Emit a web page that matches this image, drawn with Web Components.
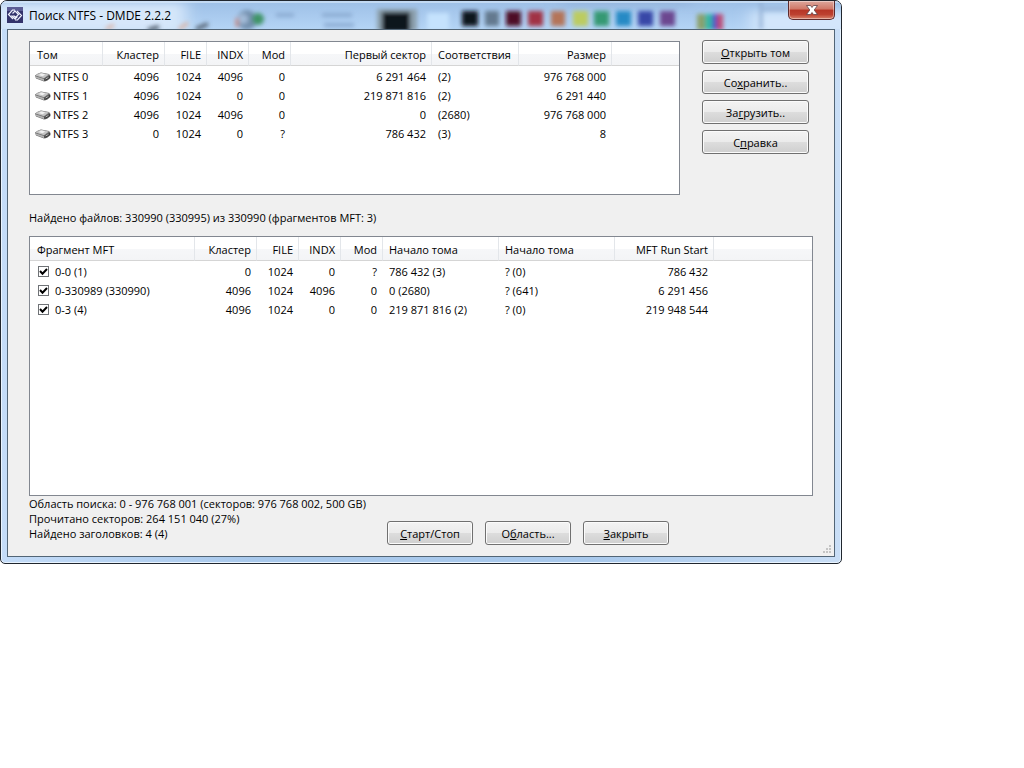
<!DOCTYPE html>
<html lang="ru">
<head>
<meta charset="utf-8">
<title>Поиск NTFS - DMDE 2.2.2</title>
<style>
    body {
        margin: 0;
        background: #fff;
        color: #000;
        font: 11px/15px "Open Sans", "Noto Sans", sans-serif;
    }

    app-window {
        max-width: 842px;
    }

    .top {
        display: flex;
        align-items: flex-start;
        gap: 22px;
        padding-right: 4px;
    }

    .top list-view {
        flex: 1;
        min-width: 0;
        min-height: 152px;
    }

    .side {
        display: flex;
        flex-direction: column;
        gap: 6px;
        width: 107px;
        margin-top: -1px;
    }

    .found {
        margin: 0;
        padding: 15px 0 11px;
    }

    .fragments {
        min-height: 258px;
    }

    .bottom {
        display: flex;
        flex-wrap: wrap;
        align-items: flex-end;
    }

    .stats {
        flex: 0 0 358px;
        padding-bottom: 4px;
    }

    .stats p {
        margin: 0;
    }

    .actions {
        display: flex;
        gap: 12px;
        padding-top: 25px;
    }

    .actions push-button {
        width: 86px;
    }
</style>
</head>
<body>

<app-window caption="Поиск NTFS - DMDE 2.2.2">
    <div class="top">
        <list-view id="volumes"></list-view>
        <div class="side">
            <push-button><u>О</u>ткрыть том</push-button>
            <push-button>Со<u>х</u>ранить..</push-button>
            <push-button>За<u>г</u>рузить..</push-button>
            <push-button>С<u>п</u>равка</push-button>
        </div>
    </div>
    <p class="found">Найдено файлов: 330990 (330995) из 330990 (фрагментов MFT: 3)</p>
    <list-view id="fragments" class="fragments"></list-view>
    <div class="bottom">
        <div class="stats">
            <p>Область поиска: 0 - 976 768 001 (секторов: 976 768 002, 500 GB)</p>
            <p>Прочитано секторов: 264 151 040 (27%)</p>
            <p>Найдено заголовков: 4 (4)</p>
        </div>
        <div class="actions">
            <push-button><u>С</u>тарт/Стоп</push-button>
            <push-button>О<u>б</u>ласть...</push-button>
            <push-button><u>З</u>акрыть</push-button>
        </div>
    </div>
</app-window>

<template id="window-template">
    <style>
        :host {
            display: block;
            box-sizing: border-box;
            position: relative;
            overflow: hidden;
            padding: 0 6px 6px;
            border: 1px solid #20262e;
            border-radius: 7px 7px 5px 5px;
            background: linear-gradient(90deg, #c4dcf8, #a9c9ec 30%, #a9c9ec 70%, #c9def6);
            box-shadow: inset 0 0 0 1px #e9f4ff;
        }

        .glass {
            position: absolute;
            left: 0;
            top: 0;
            width: 840px;
            height: 28px;
        }

        header {
            position: relative;
            display: flex;
            align-items: center;
            gap: 6px;
            height: 28px;
            box-sizing: border-box;
        }

        h1 {
            flex: 1;
            margin: 0;
            font-size: 12px;
            font-weight: normal;
        }

        .close {
            display: flex;
            align-items: center;
            justify-content: center;
            align-self: flex-start;
            width: 47px;
            height: 19px;
            padding: 0;
            border: 1px solid #5c2a2c;
            border-top: 0;
            border-radius: 0 0 5px 5px;
            background: linear-gradient(#dda79c, #cf7767 45%, #b63526 50%, #bd4130 75%, #d8836c);
            box-shadow: inset 0 0 0 1px rgba(255, 255, 255, .4);
        }

        .client {
            position: relative;
            display: flex;
            flex-direction: column;
            padding: 11px 21px;
            border: 1px solid #526576;
            background: #f0f0f0;
        }

        .grip {
            position: absolute;
            right: 2px;
            bottom: 2px;
        }
    </style>
    <svg class="glass" viewBox="0 0 840 28" aria-hidden="true">
        <defs>
            <filter id="soft" x="-50%" y="-50%" width="200%" height="200%"><feGaussianBlur stdDeviation="2"/></filter>
            <filter id="haze" x="-50%" y="-50%" width="200%" height="200%"><feGaussianBlur stdDeviation="8 4"/></filter>
            <linearGradient id="shine" x2="0" y2="1">
                <stop offset="0" stop-color="#9dbfe6"/>
                <stop offset="1" stop-color="#b4d4f5"/>
            </linearGradient>
        </defs>
        <rect width="840" height="28" fill="url(#shine)"/>
        <g filter="url(#haze)">
            <rect x="-20" y="2" width="205" height="30" fill="#d6e7fa"/>
            <rect x="750" y="10" width="110" height="24" fill="#d3e6fb"/>
            <rect x="560" y="0" width="130" height="3" fill="#86a5ce"/>
        </g>
        <g filter="url(#soft)">
            <path d="M105 28l8-4M178 28l9-6" stroke="#dcae9c" stroke-width="3"/>
            <path d="M147 29l11-3M195 28l12-5" stroke="#53616f" stroke-width="4"/>
            <circle cx="246" cy="19" r="10" fill="#7390ae"/>
            <circle cx="257" cy="18" r="6" fill="#3f9468"/>
            <circle cx="242" cy="18" r="5" fill="#a3bbd8"/>
            <path d="M236 17v9" stroke="#c9877d" stroke-width="3"/>
            <path d="M275 14h18M321 14h30M323 24h30" stroke="#8babd2" stroke-width="4"/>
            <rect x="376" y="8" width="40" height="22" fill="#8b9fab"/>
            <rect x="381" y="11" width="28" height="20" fill="#11151b"/>
            <rect x="426" y="12" width="22" height="18" fill="#c5e2fd"/>
            <rect x="461" y="10" width="16" height="15" fill="#10171f"/>
            <rect x="484" y="10" width="14" height="15" fill="#64798f"/>
            <rect x="505" y="10" width="15" height="15" fill="#4e0d27"/>
            <rect x="527" y="10" width="15" height="15" fill="#a13144"/>
            <rect x="550" y="10" width="14" height="15" fill="#b47458"/>
            <rect x="572" y="10" width="15" height="15" fill="#bccc61"/>
            <rect x="593" y="10" width="15" height="15" fill="#349973"/>
            <rect x="615" y="10" width="15" height="15" fill="#268ac5"/>
            <rect x="637" y="10" width="15" height="15" fill="#3747a7"/>
            <rect x="659" y="10" width="15" height="15" fill="#6c4690"/>
            <rect x="696" y="13" width="9" height="16" fill="#8aa06c"/>
            <rect x="704" y="13" width="7" height="16" fill="#35b7a4"/>
            <rect x="711" y="13" width="5" height="16" fill="#4b55c7"/>
            <rect x="716" y="13" width="6" height="16" fill="#bb4b73"/>
            <path d="M760 0v28M762 8h24" stroke="#92afd4" stroke-width="3"/>
        </g>
        <path d="M0 1H840" stroke="#e6f2fe"/>
    </svg>
    <header>
        <svg width="16" height="16" viewBox="0 0 16 16" aria-hidden="true">
            <rect width="16" height="16" fill="#33336b"/>
            <path d="M0 0h16v4H0z" fill="#5b5c94"/>
            <path d="M8 3L5.500 3 1.500 7.500 6 12M5.500 6.500L8 4l3.500 3.500L8.500 10.500 6.500 8.500M8 13h2.500l4-4.500L10 4M10.500 9.500L8 12 4.500 8.500" fill="none" stroke="#eef0fb" stroke-width="1.200"/>
        </svg>
        <h1></h1>
        <button class="close" type="button" aria-label="Закрыть окно">
            <svg width="12" height="10" viewBox="0 0 12 10" aria-hidden="true">
                <path d="M.5.5h4L6 2.500 7.500.5h4L8.200 5l3.300 4.500h-4L6 7.500 4.500 9.500h-4L3.800 5z" fill="#fff" stroke="#5f4347" stroke-width=".8"/>
            </svg>
        </button>
    </header>
    <div class="client">
        <slot></slot>
        <svg class="grip" width="9" height="9" viewBox="0 0 9 9" fill="#c4c4c4" aria-hidden="true">
            <path d="M6 0h2v2H6zM3 3h2v2H3zM6 3h2v2H6zM0 6h2v2H0zM3 6h2v2H3zM6 6h2v2H6z"/>
        </svg>
    </div>
</template>

<template id="button-template">
    <style>
        :host {
            display: block;
        }

        button {
            display: block;
            width: 100%;
            height: 24px;
            padding: 0;
            border: 1px solid #707070;
            border-radius: 3px;
            background: linear-gradient(#f3f3f3, #ebebeb 49%, #dddddd 50%, #cfcfcf);
            box-shadow: inset 0 0 0 1px #fbfbfb;
            color: inherit;
            font: inherit;
        }

        button:active {
            background: #cfcfcf;
        }
    </style>
    <button type="button"><slot></slot></button>
</template>

<template id="list-template">
    <style>
        :host {
            display: block;
            overflow: hidden;
            border: 1px solid #828790;
            background: #fff;
        }

        table {
            width: 100%;
            table-layout: fixed;
            border-collapse: separate;
            border-spacing: 0;
        }

        th, td {
            box-sizing: border-box;
            padding: 0 6px;
            text-align: left;
            font-weight: normal;
            white-space: nowrap;
        }

        th {
            height: 24px;
            padding-top: 2px;
            border-right: 1px solid #e3e6ea;
            border-bottom: 1px solid #d5d5d5;
            background: linear-gradient(#fff 50%, #f6f7f9 51%, #f3f4f6);
        }

        th.num {
            padding-right: 5px;
        }

        th:first-child, td:first-child {
            padding-left: 7px;
        }

        th:last-child {
            border-right: 0;
        }

        td {
            height: 19px;
        }

        tbody tr:first-child td {
            height: 20px;
            padding-top: 1px;
        }

        .num {
            text-align: right;
        }

        .item {
            display: flex;
            align-items: center;
            gap: 6px;
        }

        .volume {
            gap: 2px;
            margin-left: -2px;
        }

        input {
            appearance: none;
            flex: none;
            width: 11px;
            height: 11px;
            margin: 0 0 0 1px;
            border: 1px solid #6f7276;
            background: #fff;
        }

        input:checked {
            background: #fff url("data:image/svg+xml,%3Csvg xmlns='http://www.w3.org/2000/svg' viewBox='0 0 9 9'%3E%3Cpath d='M1 4l2.500 2.700L8 2' fill='none' stroke='%23000' stroke-width='2'/%3E%3C/svg%3E");
        }
    </style>
    <table>
        <colgroup></colgroup>
        <thead><tr></tr></thead>
        <tbody></tbody>
    </table>
</template>

<script>
const DISK_ICON = `
    <svg width="16" height="10" viewBox="0 0 16 10" aria-hidden="true">
        <path d="M0 3.500Q3 1 6 .5l8 1.500 1.500 2V6Q12 9.500 9 9.500L1 6.500z" fill="#6b6b6b"/>
        <path d="M.5 3.500Q3 1.200 6 .8l8 1.700-5 3.700z" fill="#c4c4c4"/>
        <path d="M3.500 3l3-1.500 4 1-3 1.800z" fill="#f0f0f0"/>
        <path d="M.5 4.200L9 7v2L1 6z" fill="#b4b4b4"/>
        <path d="M9.500 6.800l5.500-3v2Q12 8.500 9.500 9z" fill="#3a3a3a"/>
        <path d="M10.500 7l3-1.600" stroke="#bbb"/>
    </svg>
`;

const clone = id => document.getElementById(id).content.cloneNode(true);

class AppWindow extends HTMLElement {
    constructor() {
        super();
        this.attachShadow({mode: 'open'}).appendChild(clone('window-template'));
    }

    static get observedAttributes() {
        return ['caption'];
    }

    attributeChangedCallback(name, oldVal, newVal) {
        this.shadowRoot.querySelector('h1').textContent = newVal;
    }
}

class PushButton extends HTMLElement {
    constructor() {
        super();
        this.attachShadow({mode: 'open'}).appendChild(clone('button-template'));
    }
}

class ListView extends HTMLElement {
    constructor() {
        super();
        this.attachShadow({mode: 'open'}).appendChild(clone('list-template'));
    }

    // columns: [title, width, isNumeric], kind: 'volume' | 'check'
    render({columns, rows, kind}) {
        const root = this.shadowRoot;
        const cols = columns.map(([, width]) => `<col style="width: ${width}px">`);
        const heads = columns.map(([title, , num]) => `<th scope="col"${num ? ' class="num"' : ''}>${title}</th>`);

        root.querySelector('colgroup').innerHTML = cols.join('') + '<col>';
        root.querySelector('thead tr').innerHTML = heads.join('') + '<th></th>';
        root.querySelector('tbody').innerHTML = rows.map((row, y) => {
            const cells = row.map((text, x) => {
                if (x === 0) return `<td>${this.renderItem(text, y, kind)}</td>`;
                return `<td${columns[x][2] ? ' class="num"' : ''}>${text}</td>`;
            });
            return `<tr>${cells.join('')}<td></td></tr>`;
        }).join('');
    }

    renderItem(text, index, kind) {
        if (kind === 'check') {
            return `<div class="item"><input type="checkbox" id="item-${index}" checked><label for="item-${index}">${text}</label></div>`;
        }
        return `<div class="item volume">${DISK_ICON}<span>${text}</span></div>`;
    }
}

window.customElements.define('app-window', AppWindow);
window.customElements.define('push-button', PushButton);
window.customElements.define('list-view', ListView);

document.getElementById('volumes').render({
    kind: 'volume',
    columns: [
        ['Том', 73],
        ['Кластер', 62, true],
        ['FILE', 42, true],
        ['INDX', 42, true],
        ['Mod', 42, true],
        ['Первый сектор', 141, true],
        ['Соответствия', 87],
        ['Размер', 93, true]
    ],
    rows: [
        ['NTFS 0', '4096', '1024', '4096', '0', '6 291 464', '(2)', '976 768 000'],
        ['NTFS 1', '4096', '1024', '0', '0', '219 871 816', '(2)', '6 291 440'],
        ['NTFS 2', '4096', '1024', '4096', '0', '0', '(2680)', '976 768 000'],
        ['NTFS 3', '0', '1024', '0', '?', '786 432', '(3)', '8']
    ]
});

document.getElementById('fragments').render({
    kind: 'check',
    columns: [
        ['Фрагмент MFT', 165],
        ['Кластер', 62, true],
        ['FILE', 42, true],
        ['INDX', 42, true],
        ['Mod', 42, true],
        ['Начало тома', 116],
        ['Начало тома', 116],
        ['MFT Run Start', 99, true]
    ],
    rows: [
        ['0-0 (1)', '0', '1024', '0', '?', '786 432 (3)', '? (0)', '786 432'],
        ['0-330989 (330990)', '4096', '1024', '4096', '0', '0 (2680)', '? (641)', '6 291 456'],
        ['0-3 (4)', '4096', '1024', '0', '0', '219 871 816 (2)', '? (0)', '219 948 544']
    ]
});
</script>
</body>
</html>
